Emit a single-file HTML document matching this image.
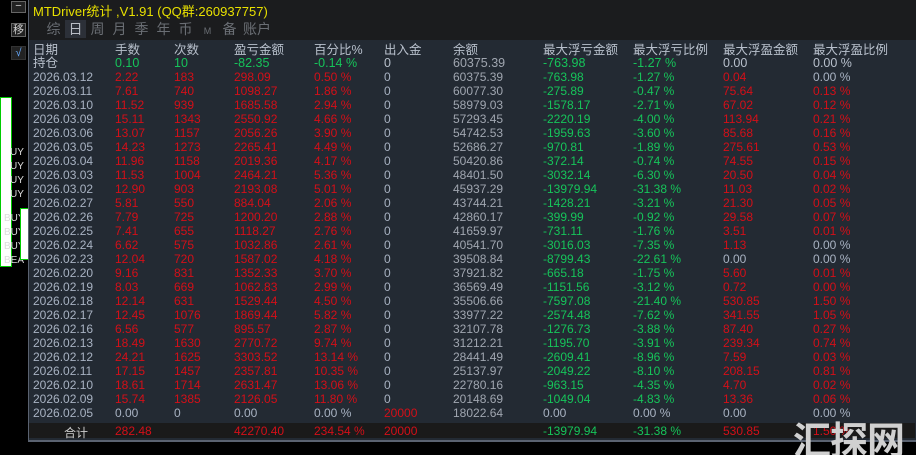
<!DOCTYPE html><html><head><meta charset="utf-8"><style>
html,body{margin:0;width:916px;height:455px;overflow:hidden}
body{background:#000;position:relative;font-family:"Liberation Sans","Noto Sans CJK SC",sans-serif;font-size:12px}
.p{position:absolute;left:28px;top:0;width:888px;height:442px;background:#232a33;border-left:1px solid #5a6270;border-bottom:2px solid #5a6270;box-sizing:border-box}
.hd{position:absolute;left:0;top:0;width:888px;height:40px;background:#1b1c1e}
.t{position:absolute;left:4px;top:1px;color:#e8e000;font-size:13px}
.tabs{position:absolute;left:14px;top:20px;color:#6a6e74;font-size:14px}
.tabs span{display:inline-block;width:21px;height:18px;line-height:18px;text-align:center;margin-right:1px}
.tabs .a{background:#2c3038;color:#b8bcc4}
table{position:absolute;left:4px;top:44px;border-collapse:collapse}
td{padding:0;height:14px;line-height:14px;white-space:nowrap;color:#a8b2c2}
tr.h td{height:13px;line-height:13px;font-size:12.5px;color:#b8c0cc}
td.r,tr.h td.r,.r{color:#d40f18}td.g,tr.h td.g,.g{color:#16c45a}td.b,tr.h td.b{color:#a0a6b0}
.tot{position:absolute;left:0;top:423px;width:886px;height:15px;background:#1a1a1a}
.tot span{position:absolute;top:1px}
.side div{position:absolute;border:1px solid #666;background:#222;color:#ccc;font-size:11px;text-align:center}
.wm{position:absolute;left:793px;top:410px;font-size:38px;font-weight:bold;color:#d0d0d0;letter-spacing:-1px;font-family:"Noto Sans CJK SC",sans-serif}
</style></head><body>
<div class="side">
<div style="left:11px;top:1px;width:13px;height:10px;line-height:8px">−</div>
<div style="left:11px;top:23px;width:13px;height:12px;line-height:12px">移</div>
<div style="left:11px;top:46px;width:13px;height:12px;line-height:12px;color:#6af;border-color:#333">√</div>
</div>
<div style="position:absolute;left:0;top:97px;width:10px;height:168px;background:#fff;border:1px solid #0c0"></div>
<div style="position:absolute;left:10px;top:146px;color:#ddd;font-size:10px;line-height:14px">UY<br>UY<br>UY<br>UY</div>
<div style="position:absolute;left:4px;top:212px;color:#ddd;font-size:10px;line-height:14px">BUY<br>BUY<br>BUY<br>BEA</div>
<div style="position:absolute;left:20px;top:208px;width:8px;height:50px;background:#fff;border:1px solid #0c0"></div>
<div class="p">
<div class="hd"><div class="t">MTDriver统计 ,V1.91 (QQ群:260937757)</div>
<div class="tabs"><span>综</span><span class="a">日</span><span>周</span><span>月</span><span>季</span><span>年</span><span>币</span><span style="font-size:9px">M</span><span>备</span><span style="width:32px">账户</span></div></div>
<table>
<colgroup><col style="width:82px"><col style="width:59px"><col style="width:60px"><col style="width:80px"><col style="width:70px"><col style="width:69px"><col style="width:90px"><col style="width:90px"><col style="width:90px"><col style="width:90px"><col style="width:90px"></colgroup>
<tr class="h"><td>日期</td><td>手数</td><td>次数</td><td>盈亏金额</td><td>百分比%</td><td>出入金</td><td>余额</td><td>最大浮亏金额</td><td>最大浮亏比例</td><td>最大浮盈金额</td><td>最大浮盈比例</td></tr>
<tr class="h"><td>持仓</td><td class="g">0.10</td><td class="g">10</td><td class="g">-82.35</td><td class="g">-0.14 %</td><td>0</td><td class="b">60375.39</td><td class="g">-763.98</td><td class="g">-1.27 %</td><td>0.00</td><td>0.00 %</td></tr>
<tr><td>2026.03.12</td><td class="r">2.22</td><td class="r">183</td><td class="r">298.09</td><td class="r">0.50 %</td><td>0</td><td class="b">60375.39</td><td class="g">-763.98</td><td class="g">-1.27 %</td><td class="r">0.04</td><td>0.00 %</td></tr>
<tr><td>2026.03.11</td><td class="r">7.61</td><td class="r">740</td><td class="r">1098.27</td><td class="r">1.86 %</td><td>0</td><td class="b">60077.30</td><td class="g">-275.89</td><td class="g">-0.47 %</td><td class="r">75.64</td><td class="r">0.13 %</td></tr>
<tr><td>2026.03.10</td><td class="r">11.52</td><td class="r">939</td><td class="r">1685.58</td><td class="r">2.94 %</td><td>0</td><td class="b">58979.03</td><td class="g">-1578.17</td><td class="g">-2.71 %</td><td class="r">67.02</td><td class="r">0.12 %</td></tr>
<tr><td>2026.03.09</td><td class="r">15.11</td><td class="r">1343</td><td class="r">2550.92</td><td class="r">4.66 %</td><td>0</td><td class="b">57293.45</td><td class="g">-2220.19</td><td class="g">-4.00 %</td><td class="r">113.94</td><td class="r">0.21 %</td></tr>
<tr><td>2026.03.06</td><td class="r">13.07</td><td class="r">1157</td><td class="r">2056.26</td><td class="r">3.90 %</td><td>0</td><td class="b">54742.53</td><td class="g">-1959.63</td><td class="g">-3.60 %</td><td class="r">85.68</td><td class="r">0.16 %</td></tr>
<tr><td>2026.03.05</td><td class="r">14.23</td><td class="r">1273</td><td class="r">2265.41</td><td class="r">4.49 %</td><td>0</td><td class="b">52686.27</td><td class="g">-970.81</td><td class="g">-1.89 %</td><td class="r">275.61</td><td class="r">0.53 %</td></tr>
<tr><td>2026.03.04</td><td class="r">11.96</td><td class="r">1158</td><td class="r">2019.36</td><td class="r">4.17 %</td><td>0</td><td class="b">50420.86</td><td class="g">-372.14</td><td class="g">-0.74 %</td><td class="r">74.55</td><td class="r">0.15 %</td></tr>
<tr><td>2026.03.03</td><td class="r">11.53</td><td class="r">1004</td><td class="r">2464.21</td><td class="r">5.36 %</td><td>0</td><td class="b">48401.50</td><td class="g">-3032.14</td><td class="g">-6.30 %</td><td class="r">20.50</td><td class="r">0.04 %</td></tr>
<tr><td>2026.03.02</td><td class="r">12.90</td><td class="r">903</td><td class="r">2193.08</td><td class="r">5.01 %</td><td>0</td><td class="b">45937.29</td><td class="g">-13979.94</td><td class="g">-31.38 %</td><td class="r">11.03</td><td class="r">0.02 %</td></tr>
<tr><td>2026.02.27</td><td class="r">5.81</td><td class="r">550</td><td class="r">884.04</td><td class="r">2.06 %</td><td>0</td><td class="b">43744.21</td><td class="g">-1428.21</td><td class="g">-3.21 %</td><td class="r">21.30</td><td class="r">0.05 %</td></tr>
<tr><td>2026.02.26</td><td class="r">7.79</td><td class="r">725</td><td class="r">1200.20</td><td class="r">2.88 %</td><td>0</td><td class="b">42860.17</td><td class="g">-399.99</td><td class="g">-0.92 %</td><td class="r">29.58</td><td class="r">0.07 %</td></tr>
<tr><td>2026.02.25</td><td class="r">7.41</td><td class="r">655</td><td class="r">1118.27</td><td class="r">2.76 %</td><td>0</td><td class="b">41659.97</td><td class="g">-731.11</td><td class="g">-1.76 %</td><td class="r">3.51</td><td class="r">0.01 %</td></tr>
<tr><td>2026.02.24</td><td class="r">6.62</td><td class="r">575</td><td class="r">1032.86</td><td class="r">2.61 %</td><td>0</td><td class="b">40541.70</td><td class="g">-3016.03</td><td class="g">-7.35 %</td><td class="r">1.13</td><td>0.00 %</td></tr>
<tr><td>2026.02.23</td><td class="r">12.04</td><td class="r">720</td><td class="r">1587.02</td><td class="r">4.18 %</td><td>0</td><td class="b">39508.84</td><td class="g">-8799.43</td><td class="g">-22.61 %</td><td>0.00</td><td>0.00 %</td></tr>
<tr><td>2026.02.20</td><td class="r">9.16</td><td class="r">831</td><td class="r">1352.33</td><td class="r">3.70 %</td><td>0</td><td class="b">37921.82</td><td class="g">-665.18</td><td class="g">-1.75 %</td><td class="r">5.60</td><td class="r">0.01 %</td></tr>
<tr><td>2026.02.19</td><td class="r">8.03</td><td class="r">669</td><td class="r">1062.83</td><td class="r">2.99 %</td><td>0</td><td class="b">36569.49</td><td class="g">-1151.56</td><td class="g">-3.12 %</td><td class="r">0.72</td><td class="r">0.00 %</td></tr>
<tr><td>2026.02.18</td><td class="r">12.14</td><td class="r">631</td><td class="r">1529.44</td><td class="r">4.50 %</td><td>0</td><td class="b">35506.66</td><td class="g">-7597.08</td><td class="g">-21.40 %</td><td class="r">530.85</td><td class="r">1.50 %</td></tr>
<tr><td>2026.02.17</td><td class="r">12.45</td><td class="r">1076</td><td class="r">1869.44</td><td class="r">5.82 %</td><td>0</td><td class="b">33977.22</td><td class="g">-2574.48</td><td class="g">-7.62 %</td><td class="r">341.55</td><td class="r">1.05 %</td></tr>
<tr><td>2026.02.16</td><td class="r">6.56</td><td class="r">577</td><td class="r">895.57</td><td class="r">2.87 %</td><td>0</td><td class="b">32107.78</td><td class="g">-1276.73</td><td class="g">-3.88 %</td><td class="r">87.40</td><td class="r">0.27 %</td></tr>
<tr><td>2026.02.13</td><td class="r">18.49</td><td class="r">1630</td><td class="r">2770.72</td><td class="r">9.74 %</td><td>0</td><td class="b">31212.21</td><td class="g">-1195.70</td><td class="g">-3.91 %</td><td class="r">239.34</td><td class="r">0.74 %</td></tr>
<tr><td>2026.02.12</td><td class="r">24.21</td><td class="r">1625</td><td class="r">3303.52</td><td class="r">13.14 %</td><td>0</td><td class="b">28441.49</td><td class="g">-2609.41</td><td class="g">-8.96 %</td><td class="r">7.59</td><td class="r">0.03 %</td></tr>
<tr><td>2026.02.11</td><td class="r">17.15</td><td class="r">1457</td><td class="r">2357.81</td><td class="r">10.35 %</td><td>0</td><td class="b">25137.97</td><td class="g">-2049.22</td><td class="g">-8.10 %</td><td class="r">208.15</td><td class="r">0.81 %</td></tr>
<tr><td>2026.02.10</td><td class="r">18.61</td><td class="r">1714</td><td class="r">2631.47</td><td class="r">13.06 %</td><td>0</td><td class="b">22780.16</td><td class="g">-963.15</td><td class="g">-4.35 %</td><td class="r">4.70</td><td class="r">0.02 %</td></tr>
<tr><td>2026.02.09</td><td class="r">15.74</td><td class="r">1385</td><td class="r">2126.05</td><td class="r">11.80 %</td><td>0</td><td class="b">20148.69</td><td class="g">-1049.04</td><td class="g">-4.83 %</td><td class="r">13.36</td><td class="r">0.06 %</td></tr>
<tr><td>2026.02.05</td><td>0.00</td><td>0</td><td>0.00</td><td>0.00 %</td><td class="r">20000</td><td class="b">18022.64</td><td>0.00</td><td>0.00 %</td><td>0.00</td><td>0.00 %</td></tr>
</table>
<div class="tot">
<span style="left:35px;color:#ccc">合计</span>
<span class="r" style="left:86px">282.48</span>
<span class="r" style="left:205px">42270.40</span>
<span class="r" style="left:285px">234.54 %</span>
<span class="r" style="left:355px">20000</span>
<span class="g" style="left:514px">-13979.94</span>
<span class="g" style="left:604px">-31.38 %</span>
<span class="r" style="left:694px">530.85</span>
<span class="r" style="left:784px">1.50 %</span>
</div>
</div>
<div class="wm">汇探网</div>
</body></html>
